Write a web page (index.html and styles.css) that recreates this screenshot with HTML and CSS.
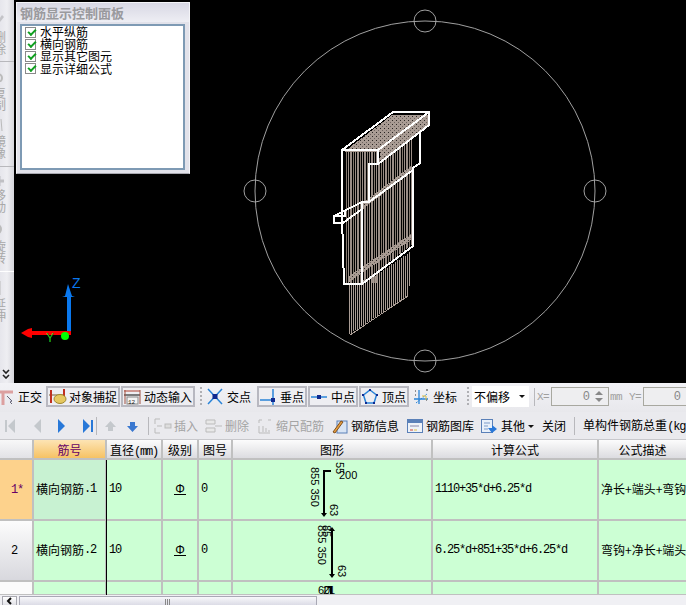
FILE: index.html
```html
<!DOCTYPE html>
<html lang="zh">
<head>
<meta charset="utf-8">
<title>钢筋显示控制面板</title>
<link rel="stylesheet" href="styles.css">
</head>
<body>
<div class="app">
  <div class="top">
    <aside class="rail">
      <div class="rail-group g1">
        <svg class="ri" width="14" height="16" viewBox="0 0 14 16"><path d="M0 14L8 3l2 2L2 15z" fill="#c4c4c8"/></svg>
        <span>删</span><span>除</span>
      </div>
      <i class="rail-sep"></i>
      <div class="rail-group gap5">
        <svg class="ri" width="14" height="14" viewBox="0 0 14 14"><path d="M1 2l6 5" stroke="#bbb" fill="none"/><circle cx="4" cy="10" r="4" fill="none" stroke="#bbb" stroke-width="2"/></svg>
        <span>复</span><span>制</span>
      </div>
      <div class="rail-group g2">
        <svg class="ri" width="14" height="14" viewBox="0 0 14 14"><path d="M1 13L4 1v12zM7 1l1 12" stroke="#bbb" fill="#ccc"/></svg>
        <span>镜</span><span>像</span>
      </div>
      <i class="rail-sep s2"></i>
      <div class="rail-group gap1">
        <svg class="ri" width="14" height="14" viewBox="0 0 14 14"><path d="M0 7h10M5 2v10" stroke="#c0c0c4" stroke-width="3" fill="none"/></svg>
        <span>移</span><span>动</span>
      </div>
      <div class="rail-group g3">
        <svg class="ri" width="14" height="14" viewBox="0 0 14 14"><path d="M4 2c4 3 3 8-3 9" stroke="#bbb" stroke-width="3" fill="none"/></svg>
        <span>旋</span><span>转</span>
      </div>
      <i class="rail-sep s3"></i>
      <div class="rail-group">
        <svg class="ri" width="14" height="14" viewBox="0 0 14 14"><path d="M0 5h4M0 9h4M6 0v14" stroke="#bbb" fill="none"/></svg>
        <span>延</span><span>伸</span>
      </div>
      <svg class="rail-more" width="8" height="10" viewBox="0 0 8 10"><path d="M1 1l3 3 3-3M1 6l3 3 3-3" stroke="#222" stroke-width="1.6" fill="none"/></svg>
    </aside>
    <main class="canvas">
      <svg class="scene" width="672" height="383" viewBox="14 0 672 383">
        <defs>
          <pattern id="dots" width="4" height="4" patternUnits="userSpaceOnUse">
            <rect width="4" height="4" fill="#a99c94"/>
            <rect width="1" height="1" fill="#2a2624"/>
            <rect x="2" y="2" width="1" height="1" fill="#6e6460"/>
          </pattern>
          <pattern id="stripes" width="7" height="8" patternUnits="userSpaceOnUse">
            <rect width="2" height="8" fill="#9a8d86"/>
            <rect x="3" width="1" height="8" fill="#85796f"/>
            <rect x="5" width="1" height="8" fill="#9a8d86"/>
          </pattern>
        </defs>
        <g fill="none" stroke="#a0a0a0">
          <circle cx="425" cy="191" r="170"/>
          <circle cx="425" cy="21" r="11"/>
          <circle cx="255" cy="191" r="11"/>
          <circle cx="595" cy="191" r="11"/>
          <circle cx="425" cy="361" r="11"/>
        </g>
        <g shape-rendering="crispEdges">
          <path d="M345 152H378V283H345ZM370 165L412 135V245L362 283V205L370 200Z" fill="url(#stripes)"/>
          <path d="M345 151L392 115H428V127L380 163V152H345Z" fill="url(#dots)"/>
          <path d="M363 203L411 166L411 172L363 209ZM349 276L411 234L411 240L349 282Z" fill="url(#dots)"/>
          <path class="bars" d="M349 283V334M351 283V333M353 283V331M355 283V330M357 283V329M359 283V328M361 283V326M363 280V325M365 280V324M367 280V322M369 278V321M371 278V320M373 276V318M375 276V317M377 274V316M379 272V314M381 272V313M383 270V312M385 268V310M387 268V309M389 266V308M391 264V306M393 264V305M395 262V304M397 260V303M399 260V301M401 258V300M403 256V299M405 256V297M407 254V296M409 252V286"/>
          <path class="bars" d="M350 335L408 296"/>
          <path class="steel" d="M342 150L393 112H429V125L420 132V163L413 168V246L362 284H344L343 250L342 216V150H378L429 112M378 150V164H369V202H362M378 164L420 132M369 202L413 170M362 284V202L334 216V223H343L362 209M334 216H345V211"/>
        </g>
        <g class="axes">
          <path d="M69 333V296" stroke="#0a78ee" stroke-width="4"/>
          <path d="M68 284L72 296 75 297H62L65 296Z" fill="#0a78ee"/>
          <path d="M71 333H31" stroke="#f00" stroke-width="4"/>
          <path d="M21 333L28 329 32 328V338L28 337Z" fill="#f00"/>
          <text class="axis-z" x="72" y="288">Z</text>
          <text class="axis-y" x="46" y="342">Y</text>
          <circle cx="65" cy="336" r="4" fill="#0f0"/>
        </g>
      </svg>
      <section class="panel">
        <h2 class="panel-title">钢筋显示控制面板</h2>
        <ul class="panel-list">
          <li><i class="check"></i>水平纵筋</li>
          <li><i class="check"></i>横向钢筋</li>
          <li><i class="check"></i>显示其它图元</li>
          <li><i class="check"></i>显示详细公式</li>
        </ul>
      </section>
    </main>
  </div>

  <div class="bar bar1">
    <div class="tool t-ortho">
      <svg width="14" height="16" viewBox="0 0 14 16"><path d="M0 3h13M3 3v13" stroke="#dca0a0" stroke-width="3" fill="none"/><path d="M7 7l5 5-2 1 2 2" stroke="#667" fill="#dde" /></svg>
      <span>正交</span>
    </div>
    <div class="toggle t-snap">
      <svg width="18" height="17" viewBox="0 0 18 17"><path d="M0 7h15" stroke="#7a5a30"/><path d="M2 2v13M15 1v8" stroke="#c03020" stroke-width="2" fill="none"/><ellipse cx="11" cy="11" rx="6" ry="4.5" fill="#e6c860" stroke="#a08830"/></svg>
      <span>对象捕捉</span>
    </div>
    <div class="toggle t-input">
      <svg width="17" height="16" viewBox="0 0 17 16"><path d="M0 2h16" stroke="#b04030"/><path d="M0 6h16" stroke="#555" stroke-width="1.5"/><path d="M1 1v14M16 1v14" stroke="#a05040"/><rect x="3" y="8" width="11" height="7" fill="#f4f4f4" stroke="#888"/><text class="tiny" x="4" y="14.5">12</text></svg>
      <span>动态输入</span>
    </div>
    <i class="grip g-a"></i>
    <div class="tool t-cross">
      <svg width="16" height="17" viewBox="0 0 16 17"><path d="M1 1l14 15M15 1L1 16" stroke="#2a84d8" stroke-width="1.5"/><rect x="5.500" y="6" width="5" height="5" fill="#102a90"/></svg>
      <span>交点</span>
    </div>
    <div class="toggle t-pt">
      <svg width="16" height="16" viewBox="0 0 16 16"><path d="M0 11h15M13 0v16" stroke="#2a84d8" stroke-width="1.5"/><rect x="11" y="9" width="4" height="4" fill="#102a90"/></svg>
      <span>垂点</span>
    </div>
    <div class="toggle t-pt">
      <svg width="16" height="16" viewBox="0 0 16 16"><path d="M0 8h16" stroke="#2a84d8" stroke-width="1.5"/><rect x="6" y="6" width="4" height="4" fill="#102a90"/></svg>
      <span>中点</span>
    </div>
    <div class="toggle t-pt">
      <svg width="16" height="16" viewBox="0 0 16 16"><path d="M8 1l6.500 5-2.500 8H4L1.500 6z" fill="none" stroke="#2a84d8" stroke-width="1.500"/><path d="M7 0h2v2H7zM0 5h2v2H0zM14 5h2v2h-2zM3 13h2v2H3zM11 13h2v2h-2z" fill="#102a90"/></svg>
      <span>顶点</span>
    </div>
    <div class="tool t-coord">
      <svg width="16" height="17" viewBox="0 0 16 17"><path d="M3 15L14 6" stroke="#2a84d8" stroke-dasharray="2 1"/><path d="M6 2v14M1 11h14" stroke="#2a84d8" stroke-width="1.300"/><path d="M2 3h1M13 2h2M2 7h1M13 12h1" stroke="#333"/><path d="M9 8h4v4" stroke="#e0c040" fill="none"/></svg>
      <span>坐标</span>
    </div>
    <i class="grip g-b"></i>
    <div class="combo"><span>不偏移</span><i class="caret"></i></div>
    <i class="thin"></i>
    <span class="off off-x">X=</span>
    <div class="spin spin-x"><span>0</span><i class="arrows"></i></div>
    <span class="off off-mm">mm</span>
    <span class="off off-y">Y=</span>
    <div class="spin spin-y"><span>0</span></div>
  </div>

  <div class="bar bar2">
    <svg class="nav n1" width="10" height="14" viewBox="0 0 10 14"><path d="M0 1h2v12H0zM10 0v14L3 7z" fill="#c4c8cc"/></svg>
    <svg class="nav n2" width="7" height="14" viewBox="0 0 7 14"><path d="M7 0v14L0 7z" fill="#c4c8cc"/></svg>
    <svg class="nav n3" width="7" height="14" viewBox="0 0 7 14"><path d="M0 0v14l7-7z" fill="#2878d8"/></svg>
    <svg class="nav n4" width="10" height="14" viewBox="0 0 10 14"><path d="M0 0v14l7-7zM8 1h2v12H8z" fill="#2878d8"/></svg>
    <i class="thin t-a"></i>
    <svg class="nav n5" width="11" height="11" viewBox="0 0 11 11"><path d="M5.500 0L11 6H8v4H3V6H0z" fill="#c4c8cc"/></svg>
    <svg class="nav n6" width="11" height="11" viewBox="0 0 11 11"><path d="M5.500 11L11 5H8V1H3v4H0z" fill="#3a78d0"/></svg>
    <i class="thin t-b"></i>
    <div class="tool2 off2 i-ins">
      <svg width="18" height="16" viewBox="0 0 18 16"><path d="M1 1h5M1 1v5M1 10v5h5M3 8h5" stroke="#bbb" fill="none"/><rect x="11" y="6" width="6" height="4" fill="#ddd" stroke="#bbb"/></svg>
      <span>插入</span>
    </div>
    <div class="tool2 off2 i-del">
      <svg width="18" height="16" viewBox="0 0 18 16"><path d="M1 2h9v4H1zM1 10h9v4H1zM10 8h7" stroke="#bbb" fill="#e8e8e8"/></svg>
      <span>删除</span>
    </div>
    <div class="tool2 off2 i-scale">
      <svg width="13" height="15" viewBox="0 0 13 15"><path d="M1 1h3M1 1v3M1 7v7h11M10 1h3M5 7v6M8 9v4M11 11v2" stroke="#bbb" fill="none"/></svg>
      <span>缩尺配筋</span>
    </div>
    <div class="tool2 i-info">
      <svg width="16" height="16" viewBox="0 0 16 16"><rect x="5" y="3" width="10" height="12" fill="#d8e4f4" stroke="#5a80b8"/><path d="M1 14L9 3l2 1-8 11z" fill="#e8a040" stroke="#805020"/></svg>
      <span>钢筋信息</span>
    </div>
    <div class="tool2 i-lib">
      <svg width="16" height="14" viewBox="0 0 16 14"><rect x=".5" y=".5" width="15" height="13" fill="#eef2f8" stroke="#5a80b8"/><path d="M1 1h14v3H1z" fill="#5a80b8"/><path d="M3 7h9" stroke="#88a"/><path d="M3 11h3" stroke="#d04030"/><path d="M7 11h3" stroke="#e0c040"/></svg>
      <span>钢筋图库</span>
    </div>
    <div class="tool2 i-other">
      <svg width="16" height="14" viewBox="0 0 16 14"><rect x=".5" y=".5" width="11" height="13" fill="#e8f0fa" stroke="#5a80b8"/><path d="M3 4h6M3 7h4M3 10h4" stroke="#7a9ac8"/><path d="M7 9h4V6l5 4-5 4z" fill="#2a78d8"/></svg>
      <span>其他</span>
      <i class="caret small"></i>
    </div>
    <span class="plain i-close">关闭</span>
    <i class="thin t-c"></i>
    <span class="plain i-total">单构件钢筋总重<span class="num">(kg)</span>：</span>
  </div>

  <div class="grid">
    <div class="cell head corner"></div>
    <div class="cell head picked">筋号</div>
    <div class="cell head">直径<span class="num">(mm)</span></div>
    <div class="cell head">级别</div>
    <div class="cell head">图号</div>
    <div class="cell head">图形</div>
    <div class="cell head">计算公式</div>
    <div class="cell head last">公式描述</div>

    <div class="cell rowhead current">1*</div>
    <div class="cell body selected">横向钢筋<span class="num">.1</span></div>
    <div class="cell body mark"><span class="num">10</span></div>
    <div class="cell body center"><span class="grade">Φ</span></div>
    <div class="cell body"><span class="num">0</span></div>
    <div class="cell body shape">
      <svg width="198" height="59" viewBox="233 460 198 59">
        <path class="rebar" d="M324 514V471H331"/>
        <path d="M321 513h6l-3 4z"/>
        <text transform="translate(311 467) rotate(90)">855 350</text>
        <text transform="translate(330 504) rotate(90)">63</text>
        <text transform="translate(336 462) rotate(90)">55</text>
        <text x="339" y="479">200</text>
      </svg>
    </div>
    <div class="cell body"><span class="num">1110+35*d+6.25*d</span></div>
    <div class="cell body last clip">净长+端头+弯钩+弯钩</div>

    <div class="cell rowhead">2</div>
    <div class="cell body">横向钢筋<span class="num">.2</span></div>
    <div class="cell body mark"><span class="num">10</span></div>
    <div class="cell body center"><span class="grade">Φ</span></div>
    <div class="cell body"><span class="num">0</span></div>
    <div class="cell body shape">
      <svg width="198" height="59" viewBox="233 521 198 59">
        <path class="rebar" d="M332 529V575"/>
        <path d="M329 574h6l-3 4zM329 531h6l-3-4z"/>
        <text transform="translate(318 525) rotate(90)">855 350</text>
        <text transform="translate(323 525) rotate(90)">85</text>
        <text transform="translate(338 565) rotate(90)">63</text>
      </svg>
    </div>
    <div class="cell body"><span class="num">6.25*d+851+35*d+6.25*d</span></div>
    <div class="cell body last clip">弯钩+净长+端头+弯钩</div>

    <div class="cell rowhead partial"></div>
    <div class="cell body"></div>
    <div class="cell body mark"></div>
    <div class="cell body"></div>
    <div class="cell body"></div>
    <div class="cell body shape">
      <svg width="198" height="13" viewBox="233 582 198 13">
        <path class="rebar" d="M328 587H331V595"/>
        <text x="318" y="594">60</text>
        <text x="323" y="594">21</text>
      </svg>
    </div>
    <div class="cell body"></div>
    <div class="cell body last"></div>
  </div>

  <div class="scroll">
    <div class="sbtn"><svg width="7" height="8" viewBox="0 0 7 8"><path d="M5 1L2 4l3 3" stroke="#111" stroke-width="2" fill="none"/></svg></div>
    <div class="thumb"><i></i></div>
  </div>
</div>
</body>
</html>
```
FILE: styles.css
```css
* { box-sizing: border-box; }
html, body { margin: 0; padding: 0; height: 100%; overflow: hidden; }
body { background: #ececf0; font: 12px/14px "Noto Sans CJK SC", "Liberation Sans", sans-serif; color: #000; }
.app { width: 686px; height: 605px; display: flex; flex-direction: column; overflow: hidden; }
h2, ul { margin: 0; padding: 0; }
.num { font-family: "Liberation Mono", monospace; letter-spacing: -1.2px; }

.top { height: 383px; display: flex; flex: none; }
.rail { width: 14px; flex: none; overflow: hidden; position: relative; background: linear-gradient(90deg, #e6e6ec, #eeeef2 50%, #d6d6dc); display: flex; flex-direction: column; align-items: flex-start; color: #a8a8a8; padding-top: 12px; }
.rail-group { display: flex; flex-direction: column; margin-left: -6px; flex: none; }
.rail-group span { display: block; height: 12px; width: 12px; font-size: 12px; line-height: 12px; }
.rail-group .ri { margin-bottom: 3px; width: 14px; }
.rail-group.gap5 .ri { margin-bottom: 5px; }
.rail-group.gap1 .ri { margin-bottom: 1px; }
.g1 { height: 44px; }
.rail-sep { display: block; width: 100%; height: 1px; background: #b8b8bc; flex: none; margin: 5px 0 6px; }
.g2 { margin-top: 7px; }
.s2 { margin: 7px 0 7px; }
.g3 { margin-top: 10px; }
.s3 { margin: 7px 0 9px; background: #fff; }
.rail-more { position: absolute; left: 2px; top: 369px; }

.canvas { flex: 1; background: #000; position: relative; overflow: hidden; }
.scene { position: absolute; left: 0; top: 0; display: block; }
.bars { fill: none; stroke: #a99c94; }
.steel { fill: none; stroke: #fff; stroke-width: 2; }
.axes text { font-family: "Liberation Sans", sans-serif; }
.axis-z { fill: #0a78ee; font-size: 14px; }
.axis-y { fill: #20d020; font-size: 12px; }

.panel { position: absolute; left: 2px; top: 2px; width: 174px; height: 172px; background: #e2e2ea; border: 1px solid #f4f4f8; border-bottom-color: #a8a8b0; display: flex; flex-direction: column; }
.panel-title { height: 19px; flex: none; font-size: 13px; line-height: 19px; font-weight: 700; color: #9a9a9e; padding-left: 3px; background: linear-gradient(#d8d8e4, #eeeef4); }
.panel-list { list-style: none; margin: 2px 4px 3px 3px; flex: 1; background: #fff; border: 2px solid #7e9ab4; padding: 0 0 0 3px; }
.panel-list li { height: 12.2px; line-height: 12px; display: flex; align-items: center; gap: 4px; white-space: nowrap; }
.check { position: relative; width: 11px; height: 11px; flex: none; background: #fff; border: 1px solid #8a8a8a; }
.check::after { content: ""; position: absolute; left: 2px; top: 1px; width: 6px; height: 3px; border-left: 2px solid #10a020; border-bottom: 2px solid #10a020; transform: rotate(-45deg); }

.bar { display: flex; align-items: center; flex: none; white-space: nowrap; overflow: hidden; }
.bar1 { height: 29px; padding-bottom: 2px; background: linear-gradient(#f2f2f6, #e8e8ec); }
.bar2 { height: 28px; padding-top: 1px; background: #eaeaee; border-bottom: 1px solid #c8c8cc; }
.bar svg { flex: none; display: block; }
.tool, .toggle { display: flex; align-items: center; flex: none; }
.tool { gap: 4px; }
.toggle { height: 21px; border: 2px solid #b8b8c0; background: #eeeef2; }
.t-ortho { width: 46px; }
.t-snap { width: 74px; padding-left: 1px; gap: 2px; }
.t-input { width: 74px; margin-left: 1px; padding-left: 1px; gap: 3px; }
.grip { display: block; width: 2px; height: 20px; flex: none; background: repeating-linear-gradient(#b0b0b4 0 2px, transparent 2px 4px); }
.g-a { margin: 0 5px 0 5px; }
.t-cross { width: 49px; }
.t-pt { width: 50px; margin-left: 1px; padding-left: 1px; gap: 4px; }
.t-coord { margin-left: 4px; }
.g-b { margin: 0 3px 0 10px; }
.combo { width: 57px; height: 21px; background: #fff; display: flex; align-items: center; justify-content: space-between; padding: 0 4px 0 2px; flex: none; }
.caret { display: block; border: 3px solid transparent; border-top: 3px solid #111; border-bottom: 0; width: 0; height: 0; }
.thin { display: block; width: 1px; height: 18px; background: #b8b8bc; flex: none; }
.bar1 .thin { margin-left: 5px; }
.off { color: #a0a0a0; font-family: "Liberation Mono", monospace; font-size: 11px; letter-spacing: -.6px; flex: none; }
.off-x { margin-left: 2px; width: 14px; }
.off-mm { margin-left: 1px; width: 19px; }
.off-y { width: 13px; }
.spin { height: 19px; border: 1px solid #a8a8a0; background: #eeeef0; flex: none; display: flex; align-items: center; justify-content: flex-end; font-family: "Liberation Mono", monospace; color: #888; }
.spin-x { width: 58px; padding-right: 18px; position: relative; }
.arrows { position: absolute; right: 5px; top: 3px; width: 0; height: 0; border: 4px solid transparent; border-bottom: 4px solid #888; border-top: 0; }
.arrows::after { content: ""; position: absolute; left: -4px; top: 7px; border: 4px solid transparent; border-top: 4px solid #888; border-bottom: 0; }
.spin-y { width: 44px; margin-left: 1px; padding-right: 6px; border-right: 0; }

.nav.n1 { margin-left: 5px; }
.nav.n2 { margin-left: 19px; }
.nav.n3 { margin-left: 17px; }
.nav.n4 { margin-left: 18px; }
.t-a { margin-left: 3px; }
.nav.n5 { margin-left: 8px; }
.nav.n6 { margin-left: 11px; }
.t-b { margin-left: 10px; }
.tool2 { display: flex; align-items: center; flex: none; }
.off2 { color: #a4a4a4; }
.i-ins { margin-left: 5px; gap: 2px; }
.i-del { margin-left: 7px; gap: 2px; }
.i-scale { margin-left: 9px; gap: 5px; }
.i-info { margin-left: 8px; gap: 3px; }
.i-lib { margin-left: 8px; gap: 3px; }
.i-other { margin-left: 7px; gap: 4px; }
.caret.small { margin-left: -1px; }
.plain { flex: none; }
.i-close { margin-left: 8px; }
.t-c { margin-left: 8px; }
.i-total { margin-left: 8px; }

.grid { height: 155px; flex: none; display: grid; grid-template-columns: 34px 73px 56px 36px 34px 200px 166px 87px; grid-template-rows: 20px 61px 61px 14px; overflow: hidden; background: #ccffd4; }
.cell { border-right: 2px solid #c0c0c0; border-bottom: 2px solid #c0c0c0; overflow: hidden; min-width: 0; white-space: nowrap; }
.last { border-right: 0; }
.head { background: linear-gradient(#fcfcfc, #dcdce0); text-align: center; line-height: 19px; }
.corner { background: linear-gradient(#f8f8f8, #e2e2e6); }
.picked { background: linear-gradient(#fde4b4, #f6c264); color: #660066; }
.rowhead { background: linear-gradient(#fcfcfc, #d8d8de); display: flex; align-items: center; padding-left: 11px; font-family: "Liberation Mono", monospace; letter-spacing: -1.2px; }
.current { background: #fdd28c; color: #660066; }
.partial { background: #fbfbfb; }
.body { background: #ccffd4; display: flex; align-items: center; padding-left: 2px; padding-bottom: 2px; }
.selected { background: #c8f2d2; }
.mark { position: relative; overflow: visible; }
.mark::before { content: ""; position: absolute; left: -1px; top: 0; bottom: -2px; width: 1px; background: #000; }
.center { justify-content: center; padding-left: 0; }
.grade { position: relative; font-family: "Liberation Sans", sans-serif; font-size: 12px; line-height: 12px; display: block; }
.grade::after { content: ""; position: absolute; left: -1px; right: -1px; bottom: 0; height: 1px; background: #000; }
.clip { justify-content: flex-start; }
.shape { padding: 0; display: block; position: relative; }
.shape svg { display: block; }
.shape text { font-family: "Liberation Sans", sans-serif; font-size: 11px; fill: #000; }
.rebar { fill: none; stroke: #000; stroke-width: 2; }
.tiny { font-family: "Liberation Mono", monospace; font-size: 6px; fill: #222; }

.scroll { flex: 1; display: flex; align-items: stretch; padding: 1px 0 0 2px; background: #f0f0f4; min-height: 0; overflow: hidden; }
.sbtn { width: 15px; border: 1px solid #a8a8b0; border-bottom: 0; background: linear-gradient(#fff, #e0e0e6); display: flex; align-items: center; justify-content: center; flex: none; }
.thumb { width: 298px; margin-left: 2px; border: 1px solid #a8a8b4; border-bottom: 0; background: linear-gradient(#f8f8fa, #dcdce6); display: flex; justify-content: center; }
.thumb i { display: block; width: 6px; height: 6px; margin-top: 2px; background: repeating-linear-gradient(90deg, #888 0 1px, transparent 1px 2px); }
```
